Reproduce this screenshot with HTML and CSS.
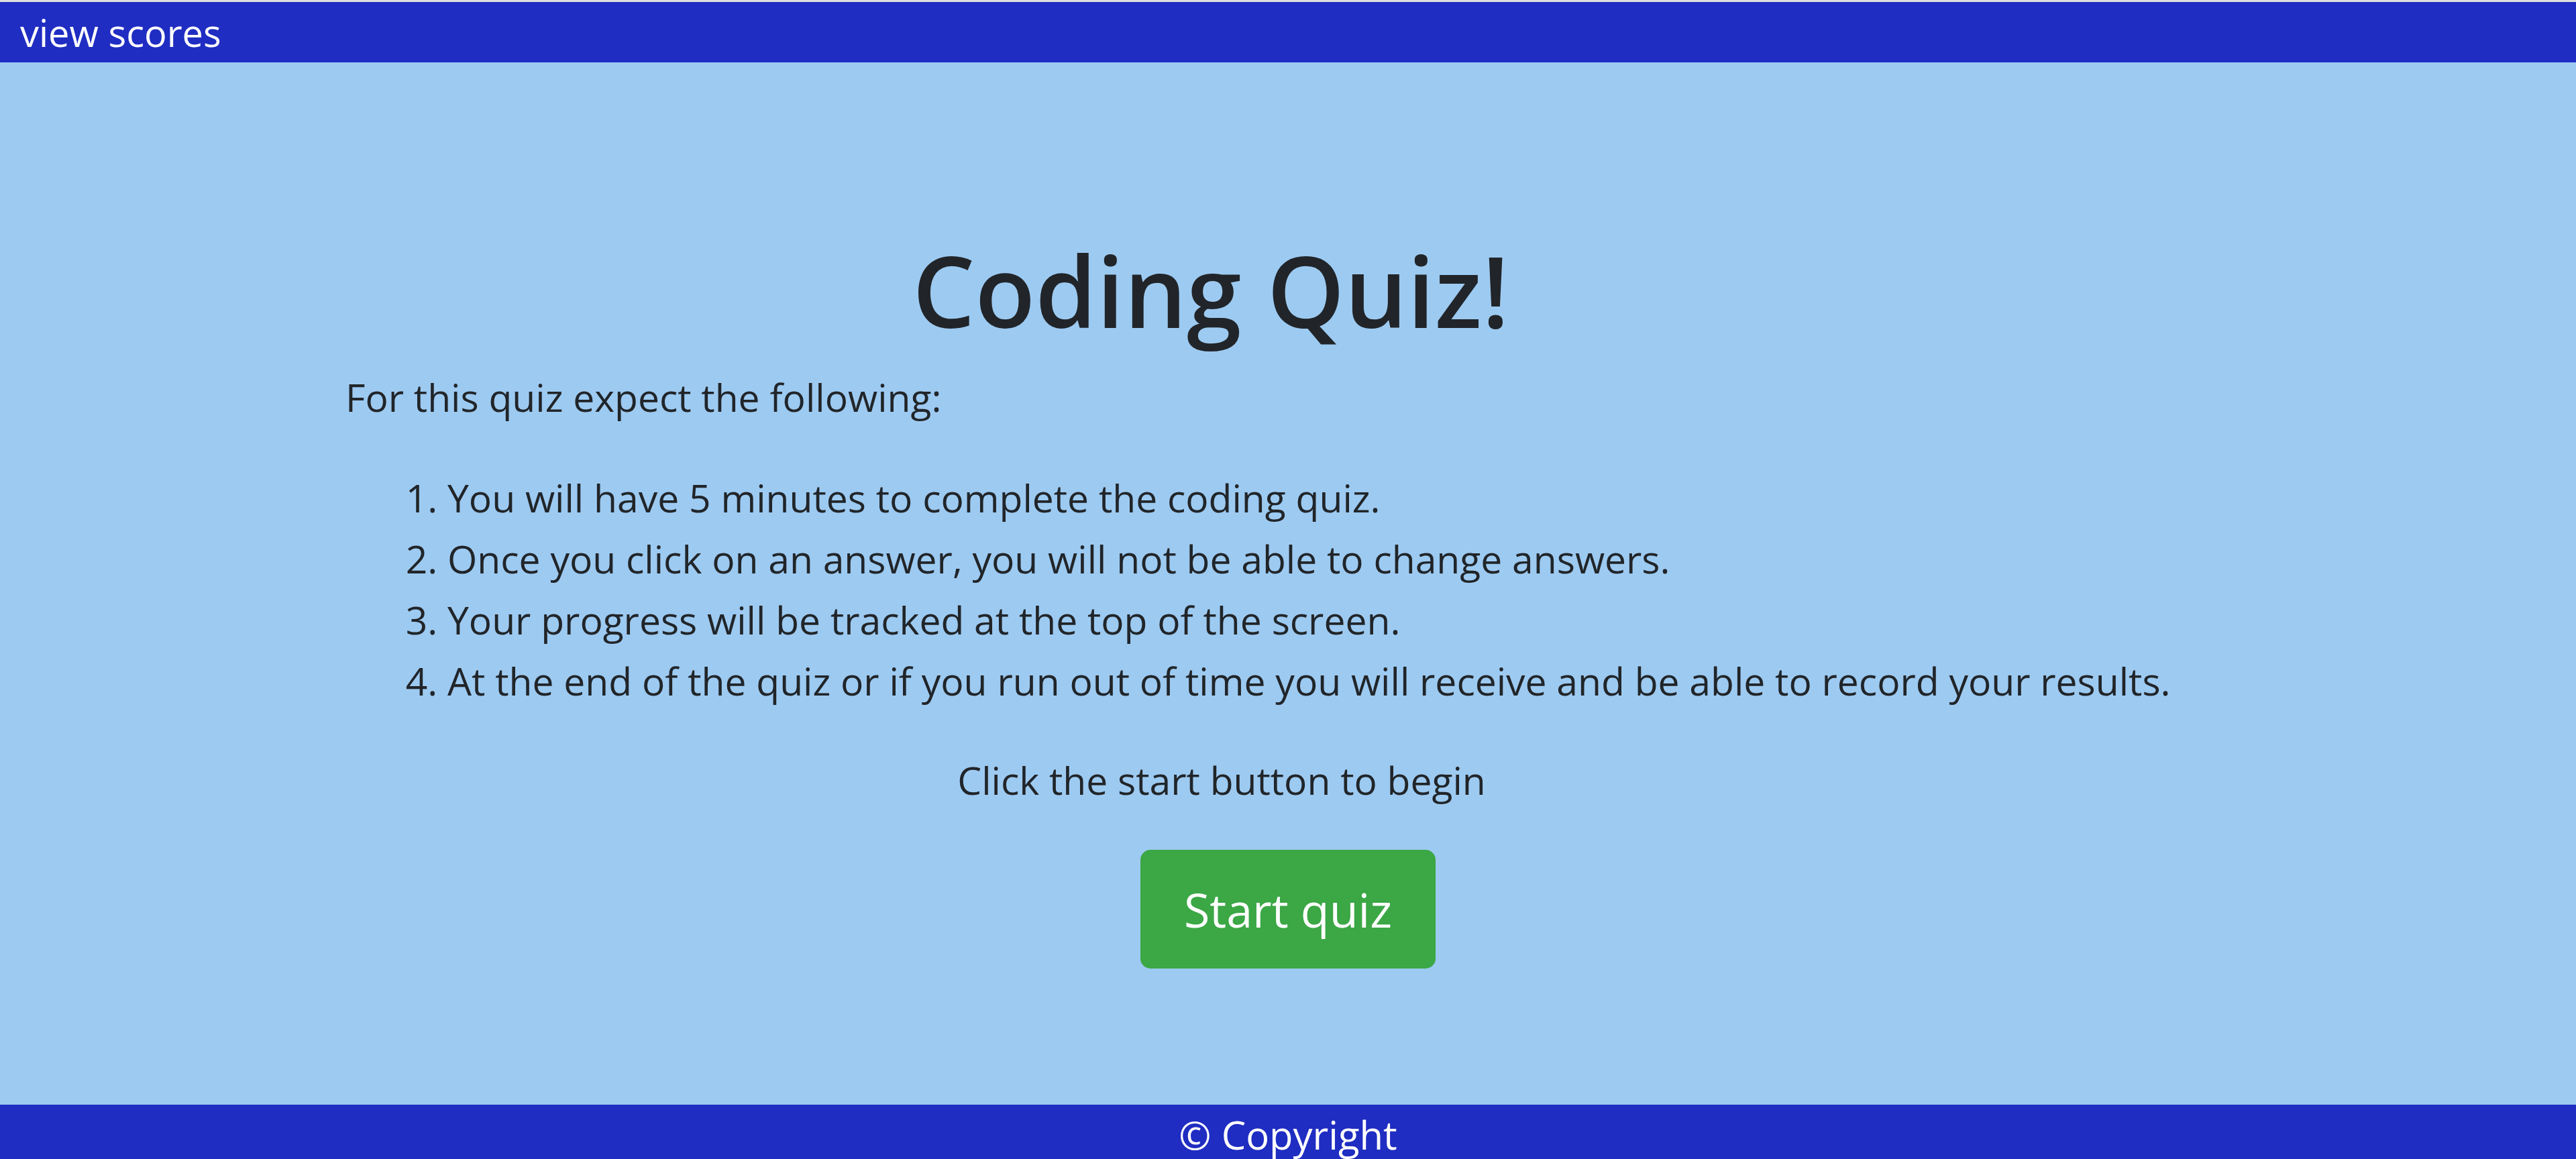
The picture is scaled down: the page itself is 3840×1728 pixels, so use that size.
FILE: index.html
```html
<!DOCTYPE html>
<html lang="en">
<head>
<meta charset="utf-8">
<title>Coding Quiz</title>
<link rel="stylesheet" href="styles.css">
</head>
<body>
<header class="topbar">
  <a class="scores-link" href="#">view scores</a>
</header>
<main class="main">
  <section class="intro">
    <h1 class="title">Coding Quiz!</h1>
    <p class="lead-in">For this quiz expect the following:</p>
    <ol class="rules">
      <li>You will have 5 minutes to complete the coding quiz.</li>
      <li>Once you click on an answer, you will not be able to change answers.</li>
      <li>Your progress will be tracked at the top of the screen.</li>
      <li>At the end of the quiz or if you run out of time you will receive and be able to record your results.</li>
    </ol>
    <p class="prompt">Click the start button to begin</p>
  </section>
  <div class="actions">
    <button class="start-btn" type="button">Start quiz</button>
  </div>
</main>
<footer class="footer">© Copyright</footer>
</body>
</html>
```

FILE: styles.css
```css
html, body {
  margin: 0;
  padding: 0;
}

body {
  font-family: "Open Sans", "Noto Sans", sans-serif;
  color: #212529;
  background: #9dcaf1;
  display: flex;
  flex-direction: column;
  min-height: 100vh;
}

.topbar {
  border-top: 3px solid #dedede;
  background: #1f2dc2;
  height: 90px;
  display: flex;
  align-items: center;
  padding-left: 30px;
}

.scores-link {
  color: #ffffff;
  text-decoration: none;
  font-size: 56px;
  line-height: 90px;
}

.main {
  background: #9dcaf1;
  padding-top: 251px;
  padding-bottom: 203px;
}

.intro {
  margin-left: 515px;
  width: 2580px;
}

.title {
  margin: 0 0 27px 0;
  font-size: 147px;
  font-weight: 600;
  line-height: 1.2;
  text-align: center;
}

.lead-in {
  margin: 0;
  font-size: 57px;
  line-height: 91px;
}

.rules {
  margin: 59px 0 0 0;
  padding-left: 152px;
  font-size: 57px;
  line-height: 91px;
  white-space: nowrap;
}

.prompt {
  margin: 57px 0 0 0;
  padding-left: 32px;
  font-size: 57px;
  line-height: 91px;
  text-align: center;
}

.actions {
  display: flex;
  justify-content: center;
  margin-top: 58px;
}

.start-btn {
  width: 440px;
  height: 177px;
  border: none;
  border-radius: 15px;
  background: #3ba745;
  color: #ffffff;
  font-family: "Open Sans", "Noto Sans", sans-serif;
  font-size: 70px;
  padding: 0;
  cursor: pointer;
}

.footer {
  background: #1f2dc2;
  color: #ffffff;
  height: 90px;
  text-align: center;
  font-size: 58px;
  line-height: 90px;
  flex-shrink: 0;
}
```
